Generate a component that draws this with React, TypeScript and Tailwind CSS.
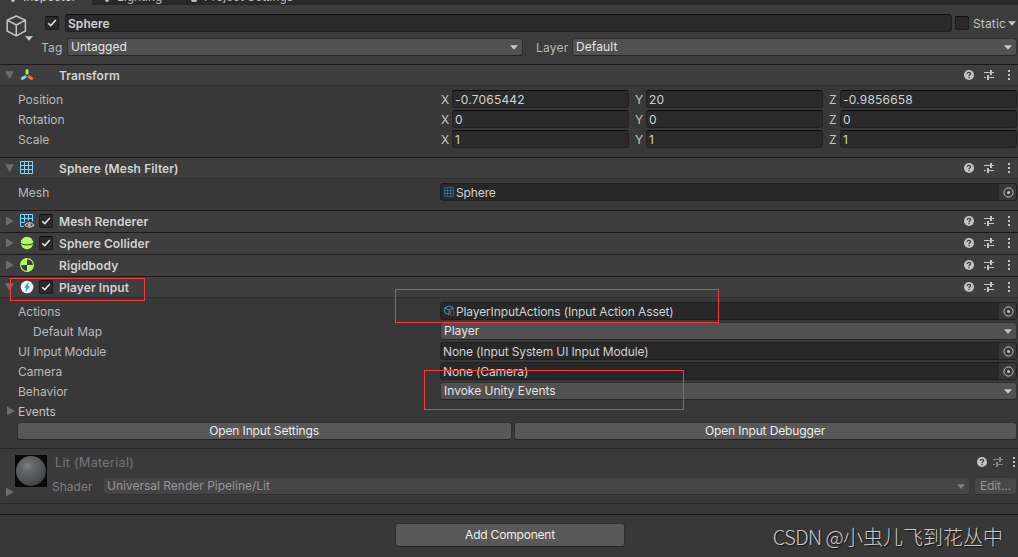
import type { ReactNode } from "react";
import clsx from "clsx";

function Check({ checked = true }: { checked?: boolean }) {
  return (
    <span className="flex h-3.5 w-3.5 shrink-0 items-center justify-center rounded-[2px] border border-[#1c1c1c] border-t-[#0f0f0f] bg-[#2a2a2a]">
      {checked && (
        <svg width="10" height="10" viewBox="0 0 10 10" fill="none" stroke="#e4e4e4" strokeWidth="1.5">
          <path d="M1.2 5.2 L3.8 7.6 L8.8 2" />
        </svg>
      )}
    </span>
  );
}

function Foldout({ open, className }: { open?: boolean; className?: string }) {
  return (
    <svg className={clsx("shrink-0", className)} width="10" height="10" viewBox="0 0 10 10" fill="#6c6c6c">
      {open ? <path d="M0 1.2 H9 L4.5 9 Z" /> : <path d="M1 0.5 V9.5 L9 5 Z" />}
    </svg>
  );
}

function Caret({ dim, className }: { dim?: boolean; className?: string }) {
  return (
    <svg className={clsx("shrink-0", className)} width="8" height="5" viewBox="0 0 8 5" fill={dim ? "#838383" : "#c8c8c8"}>
      <path d="M0 0.2 H8 L4 4.8 Z" />
    </svg>
  );
}

function HeaderTools({ dim }: { dim?: boolean }) {
  return (
    <span className="flex shrink-0 items-center">
      <svg width="10" height="10" viewBox="0 0 10 10">
        <circle cx="5" cy="5" r="5" fill="#c4c4c4" />
        <path d="M3.3 3.9 C3.3 1.7 6.8 1.8 6.7 3.8 C6.6 4.9 5 4.8 5 6.2" fill="none" stroke="#3a3a3a" strokeWidth="1.2" />
        <rect x="4.4" y="7" width="1.2" height="1.2" fill="#3a3a3a" />
      </svg>
      <svg className={dim ? "ml-[6px]" : "ml-[10px]"} width="10" height="10" viewBox="0 0 10 10" fill={dim ? "#858585" : "#c4c4c4"}>
        <rect x="0" y="2" width="6" height="1" />
        <rect x="6" y="0" width="2" height="5" />
        <rect x="8" y="2" width="2" height="1" />
        <rect x="0" y="7" width="2" height="1" />
        <rect x="3" y="5" width="2" height="5" />
        <rect x="5" y="7" width="5" height="1" />
      </svg>
      <svg className={dim ? "ml-[10px]" : "ml-[14px]"} width="2" height="10" viewBox="0 0 2 10" fill="#c4c4c4">
        <rect y="0" width="2" height="2" />
        <rect y="4" width="2" height="2" />
        <rect y="8" width="2" height="2" />
      </svg>
    </span>
  );
}

function GridIcon({ size = 13, color = "#7fd6fd", eye }: { size?: number; color?: string; eye?: boolean }) {
  return (
    <svg width={size} height={size} viewBox="0 0 13 13" fill="none" stroke={color} className="overflow-visible">
      <path d="M0.5 0.5 H12.5 V12.5 H0.5 Z M0.5 4.5 H12.5 M0.5 8.5 H12.5 M4.5 0.5 V12.5 M8.5 0.5 V12.5" />
      {eye && (
        <g>
          <path d="M3.5 11 C6.5 6 12 6 15 11 C12 15 6.5 15 3.5 11 Z" fill="#3e3e3e" stroke="#3e3e3e" strokeWidth="1.5" />
          <path d="M5 11 C7 7.7 11.5 7.7 13.7 11 C11.5 13.9 7 13.9 5 11 Z" stroke="#b9b9b9" strokeWidth="1.3" />
          <circle cx="9.3" cy="10.9" r="1.6" fill="#b9b9b9" stroke="none" />
        </g>
      )}
    </svg>
  );
}

function TransformIcon() {
  return (
    <svg width="14" height="14" viewBox="0 0 14 14" strokeLinecap="round" strokeWidth="3">
      <path d="M7 2.4 V5.2" stroke="#a6ee4c" />
      <path d="M5 8.8 L2.3 10.5" stroke="#7fd6fd" />
      <path d="M9 8.8 L11.7 10.5" stroke="#fc6d40" />
    </svg>
  );
}

function ColliderIcon() {
  return (
    <svg width="14" height="14" viewBox="0 0 14 14">
      <circle cx="7" cy="7" r="6.2" fill="#b1fd59" />
      <path d="M0.8 7.4 C3.5 9.5 10.5 9.5 13.2 7.4" fill="none" stroke="#3e3e3e" strokeWidth="1.1" />
    </svg>
  );
}

function RigidbodyIcon() {
  return (
    <svg width="14" height="14" viewBox="0 0 14 14">
      <circle cx="7" cy="7" r="6.4" fill="#3e3e3e" stroke="#b1fd59" strokeWidth="1.1" />
      <path d="M7 7 V0.6 A6.4 6.4 0 0 0 0.6 7 Z M7 7 V13.4 A6.4 6.4 0 0 0 13.4 7 Z" fill="#b1fd59" />
    </svg>
  );
}

function PlayerInputIcon() {
  return (
    <svg width="14" height="14" viewBox="0 0 14 14">
      <circle cx="7" cy="7" r="6.3" fill="#f4f4f4" />
      <path d="M8.4 2.5 L4.6 7.4 H6.4 L5.8 11.5 L9.6 6.4 H7.8 Z" fill="#1ba4d8" stroke="#1ba4d8" strokeWidth="0.4" />
    </svg>
  );
}

function ActionsIcon() {
  return (
    <svg width="11" height="12" viewBox="0 0 11 12" fill="none">
      <path d="M5 0.8 L9.2 2.8 V5 M5 0.8 L0.8 2.8 V7.6 L5 9.8 V5 M0.8 2.8 L5 5 L9.2 2.8" stroke="#4f93b4" />
      <path d="M7.6 6 Q6.6 6 6.7 7.2 Q6.7 8.2 6 8.3 Q6.7 8.4 6.7 9.5 Q6.6 10.6 7.6 10.6 M8.8 6 Q9.8 6 9.7 7.2 Q9.7 8.2 10.4 8.3 Q9.7 8.4 9.7 9.5 Q9.8 10.6 8.8 10.6" stroke="#c04a2c" />
    </svg>
  );
}

function Header({ icon, title, open, check }: { icon: ReactNode; title: string; open?: boolean; check?: boolean }) {
  return (
    <div
      className={clsx(
        "flex h-[22px] shrink-0 items-center border-t border-[#1a1a1a] bg-[#3e3e3e] pr-2",
        open ? "border-b border-b-[#303030]" : "pb-px"
      )}
    >
      <Foldout open={open} className="ml-[5px]" />
      <span className="ml-[5px] flex h-[14px] w-[14px] shrink-0">{icon}</span>
      <span className="ml-[5px] w-5 shrink-0">{check && <Check />}</span>
      <span className="flex-1 pt-px text-[12px] font-semibold tracking-[0.08px] text-[#d2d2d2]">{title}</span>
      <HeaderTools />
    </div>
  );
}

function Row({ label, indent, tight, children }: { label: string; indent?: boolean; tight?: boolean; children?: ReactNode }) {
  return (
    <div className="flex h-[18px] items-center pr-px">
      <span
        className={clsx(
          "w-[440px] shrink-0 pt-0.5 text-[#bababa]",
          indent ? "pl-[33px]" : "pl-[18px]",
          tight && "tracking-[-0.12px]"
        )}
      >
        {label}
      </span>
      {children}
    </div>
  );
}

function TextField({ value, bold }: { value: string; bold?: boolean }) {
  return (
    <div
      className={clsx(
        "flex h-[18px] min-w-0 flex-1 items-center rounded-[3px] border border-[#212121] border-t-[#0d0d0d] bg-[#2a2a2a] pl-[2px] pt-0.5 text-[#d2d2d2]",
        bold ? "font-semibold tracking-[0.05px]" : "tracking-[0.2px]"
      )}
    >
      {value}
    </div>
  );
}

function ObjectField({ value, icon }: { value: string; icon?: ReactNode }) {
  return (
    <div className="flex h-[18px] flex-1 items-center overflow-hidden rounded-[3px] border border-[#202020] bg-[#282828] text-[#d2d2d2]">
      {icon && <span className="ml-[3px] flex w-[11px] items-center">{icon}</span>}
      <span className={clsx("flex-1 pt-0.5 tracking-[-0.12px]", icon ? "pl-px" : "pl-[2px]")}>{value}</span>
      <span className="flex h-full w-[17px] items-center justify-center bg-[#373737] pl-px">
        <svg width="11" height="11" viewBox="0 0 11 11">
          <circle cx="5.5" cy="5.5" r="4.6" fill="none" stroke="#c4c4c4" />
          <circle cx="5.5" cy="5.5" r="1.5" fill="#c4c4c4" />
        </svg>
      </span>
    </div>
  );
}

function Dropdown({ value, className }: { value: string; className?: string }) {
  return (
    <div
      className={clsx(
        "flex h-[18px] items-center rounded-[3px] border border-[#303030] border-b-[#242424] bg-[#515151] pl-[3px] pr-1 text-[#e4e4e4]",
        className
      )}
    >
      <span className="flex-1">{value}</span>
      <Caret />
    </div>
  );
}

const axes = ["X", "Y", "Z"];

function VectorRow({ label, values }: { label: string; values: string[] }) {
  return (
    <Row label={label}>
      <div className="flex flex-1 gap-[5px]">
        {values.map((v, i) => (
          <div key={axes[i]} className="flex min-w-0 flex-1 items-center">
            <span className="w-3 shrink-0 pl-px pt-0.5 text-[#c4c4c4]">{axes[i]}</span>
            <TextField value={v} />
          </div>
        ))}
      </div>
    </Row>
  );
}

function Button({ label, className }: { label: string; className?: string }) {
  return (
    <button
      className={clsx(
        "flex items-center justify-center rounded-[3px] border border-[#303030] border-b-[#242424] bg-[#585858] text-[#eeeeee]",
        className
      )}
    >
      {label}
    </button>
  );
}

export default function App() {
  return (
    <div className="relative flex h-[557px] w-[1018px] flex-col overflow-hidden bg-[#383838] font-['Inter',sans-serif] text-[12px] leading-4 tracking-[0px]">
      {/* Tab strip, scrolled almost out of view */}
      <div className="flex h-[5px] shrink-0 items-end overflow-hidden bg-[#282828] text-[#bdbdbd]">
        <div className="flex h-full w-[92px] items-end bg-[#3c3c3c] pl-[11px]">
          <span className="h-[2px] w-[4px] self-start rounded-b-full bg-[#bdbdbd]" />
          <span className="ml-2 h-4 text-[#d2d2d2]">Inspector</span>
        </div>
        <span className="ml-[13px] h-[2px] w-[4px] self-start rounded-b-full bg-[#bdbdbd]" />
        <span className="ml-2 h-4 w-[74px]">Lighting</span>
        <span className="h-[2px] w-[6px] self-start rounded-b-full bg-[#bdbdbd]" />
        <span className="ml-[7px] h-4">Project Settings</span>
      </div>

      {/* Game object header */}
      <div className="flex h-[59px] shrink-0 bg-[#3c3c3c]">
        <div className="relative w-[41px] shrink-0">
          <svg className="ml-1.5 mt-2.5" width="21" height="22" viewBox="0 0 21 22" fill="none" stroke="#c4c4c4" strokeWidth="1.5" strokeLinejoin="round">
            <path d="M10.3 1 L19.4 5.2 V16 L10.3 20.8 L1.2 16 V5.2 Z M1.2 5.2 L10.3 10 L19.4 5.2 M10.3 10 V20.8" />
          </svg>
          <Caret className="absolute left-[25px] top-[31px]" />
        </div>
        <div className="flex flex-1 flex-col gap-[6px] pr-px pt-[9px]">
          <div className="flex items-center">
            <span className="ml-1 mr-[6px]"><Check /></span>
            <div className="flex w-[887px]"><TextField value="Sphere" bold /></div>
            <span className="ml-[3px]"><Check checked={false} /></span>
            <span className="ml-1 w-[35px] shrink-0 pt-0.5 tracking-[0.15px] text-[#c4c4c4]">Static</span>
            <Caret />
          </div>
          <div className="flex items-center">
            <span className="w-[26px] pt-0.5 tracking-[0.2px] text-[#bababa]">Tag</span>
            <Dropdown value="Untagged" className="w-[456px]" />
            <span className="ml-[13px] w-[36px] pt-0.5 tracking-[0.2px] text-[#bababa]">Layer</span>
            <Dropdown value="Default" className="flex-1 tracking-[0.1px]" />
          </div>
        </div>
      </div>

      <Header title="Transform" open icon={<TransformIcon />} />
      <div className="flex h-[71px] shrink-0 flex-col gap-0.5 pt-1">
        <VectorRow label="Position" values={["-0.7065442", "20", "-0.9856658"]} />
        <VectorRow label="Rotation" values={["0", "0", "0"]} />
        <VectorRow label="Scale" values={["1", "1", "1"]} />
      </div>

      <Header title="Sphere (Mesh Filter)" open icon={<GridIcon />} />
      <div className="h-[31px] shrink-0 pt-1">
        <Row label="Mesh">
          <ObjectField value="Sphere" icon={<GridIcon size={10} color="#407a96" />} />
        </Row>
      </div>

      <Header title="Mesh Renderer" check icon={<GridIcon eye />} />
      <Header title="Sphere Collider" check icon={<ColliderIcon />} />
      <Header title="Rigidbody" icon={<RigidbodyIcon />} />
      <Header title="Player Input" check open icon={<PlayerInputIcon />} />
      <div className="flex h-[150px] shrink-0 flex-col gap-0.5 pt-1">
        <Row label="Actions">
          <ObjectField value="PlayerInputActions (Input Action Asset)" icon={<ActionsIcon />} />
        </Row>
        <Row label="Default Map" indent>
          <Dropdown value="Player" className="flex-1" />
        </Row>
        <Row label="UI Input Module" tight>
          <ObjectField value="None (Input System UI Input Module)" />
        </Row>
        <Row label="Camera">
          <ObjectField value="None (Camera)" />
        </Row>
        <Row label="Behavior">
          <Dropdown value="Invoke Unity Events" className="flex-1" />
        </Row>
        <div className="flex h-[18px] items-center">
          <Foldout className="ml-1.5" />
          <span className="ml-0.5 pt-0.5 text-[#c4c4c4]">Events</span>
        </div>
        <div className="flex gap-[2px] pl-[17px] pr-px tracking-[-0.12px]">
          <Button label="Open Input Settings" className="h-[18px] w-[495px] pr-px" />
          <Button label="Open Input Debugger" className="h-[18px] flex-1 pr-px" />
        </div>
      </div>

      {/* Material preview */}
      <div className="flex h-[56px] shrink-0 border-y border-[#272727] bg-[#3a3a3a]">
        <div className="flex w-[52px] shrink-0">
          <Foldout className="ml-[5px] mt-[38px]" />
          <div className="mt-1.5 flex h-8 w-8 items-center justify-center bg-[#070808]">
            <div className="h-[30px] w-[30px] rounded-full bg-[radial-gradient(circle_at_38%_32%,#7c7e80_0%,#636568_22%,#515457_55%,#35373a_85%,#262626_100%)]" />
          </div>
        </div>
        <div className="flex flex-1 flex-col pt-[5px]">
          <div className="flex h-[16px] items-center">
            <span className="flex-1 pl-[3px] pt-0.5 text-[12.5px] tracking-[0.35px] text-[#777777]">Lit (Material)</span>
            <span className="mr-[3px]"><HeaderTools dim /></span>
          </div>
          <div className="mt-[7px] flex h-[18px] items-center pr-px text-[#8f8f8f]">
            <span className="w-[51px] pt-0.5 text-[#7d7d7d]">Shader</span>
            <div className="flex h-[18px] w-[867px] items-center rounded-[3px] border border-[#383838] border-b-[#303030] bg-[#454545] pl-[3px] pr-1 text-[#969696]">
              <span className="flex-1">Universal Render Pipeline/Lit</span>
              <Caret dim />
            </div>
            <div className="ml-1 flex h-[18px] flex-1 items-center justify-center rounded-[3px] border border-[#383838] border-b-[#303030] bg-[#484848] tracking-[-0.1px] text-[#969696]">
              Edit...
            </div>
          </div>
        </div>
      </div>
      <div className="h-[10px] shrink-0" />

      <div className="flex flex-1 items-start border-t border-[#1a1a1a] pl-[395px] pt-2">
        <Button label="Add Component" className="h-[24px] w-[230px] pb-px tracking-[-0.2px]" />
      </div>
      <div className="absolute right-[15px] top-[523px] flex whitespace-nowrap font-['Noto_Sans_CJK_SC',sans-serif] text-[20px] font-light leading-7 text-[#cccccc] [text-shadow:1px_1px_1px_#111]">
        <span className="tracking-[-0.6px]">CSDN @</span>
        <span>小虫儿飞到花丛中</span>
      </div>

      {/* Red callouts */}
      <div className="absolute left-[10px] top-[278px] h-[23px] w-[135px] border border-[#fb3a38]" />
      <div className="absolute left-[395px] top-[289px] h-[34px] w-[324px] border border-[#fb3a38]" />
      <div className="absolute left-[424px] top-[370px] h-[40px] w-[260px] border border-[#fb3a38]" />
    </div>
  );
}
